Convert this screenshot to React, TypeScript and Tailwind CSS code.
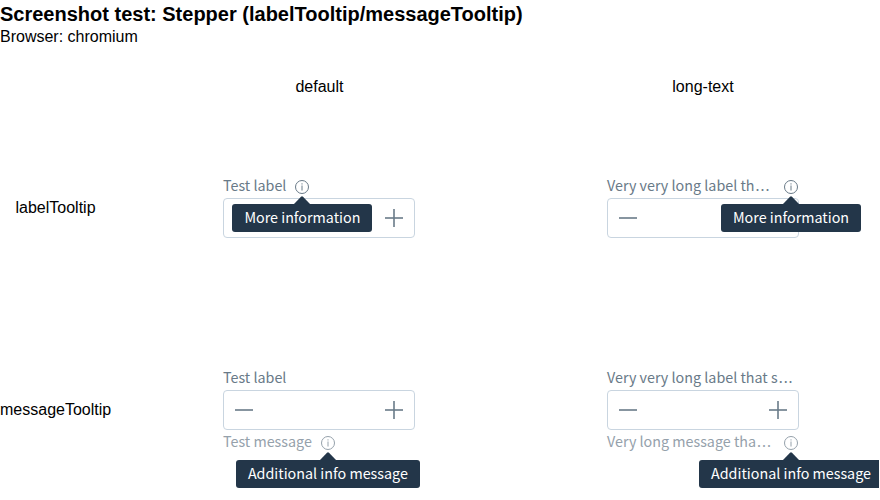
import type { ReactNode } from 'react';

function Tooltip({ children }: { children: ReactNode }) {
  return (
    <div className="absolute left-1/2 top-[17px] z-10 flex w-0 flex-col items-center">
      <svg className="block shrink-0" width="16" height="8" viewBox="0 0 16 8" fill="#233649">
        <path d="M0 8 L7 .8 Q8 -.1 9 .8 L16 8Z" />
      </svg>
      <div className="h-7 whitespace-nowrap rounded-[3px] bg-[#233649] px-3 text-[14.32px] leading-[26px] text-white">
        {children}
      </div>
    </div>
  );
}

function InfoIcon({ tooltip }: { tooltip: string }) {
  return (
    <span className="relative ml-2 mt-1 block size-4 shrink-0">
      <svg className="block" width="16" height="16" viewBox="0 0 16 16" fill="none" stroke="currentColor">
        <circle cx="8" cy="8" r="6.5" />
        <path d="M8 6.5v5M8 4.3v1.2" />
      </svg>
      <Tooltip>{tooltip}</Tooltip>
    </span>
  );
}

type FieldTextProps = { text: string; shortened?: boolean; tooltip?: string; className: string };

function FieldText({ text, shortened, tooltip, className }: FieldTextProps) {
  return (
    <div className={`flex h-5 whitespace-nowrap text-[14.32px] leading-5 ${className}`}>
      <span className={shortened ? 'grow' : ''}>
        {text}
        {shortened && <span className="ml-px tracking-[1px]">...</span>}
      </span>
      {tooltip && <InfoIcon tooltip={tooltip} />}
    </div>
  );
}

type StepperProps = {
  label: string;
  labelTooltip?: string;
  message?: string;
  messageTooltip?: string;
  shortened?: boolean;
};

function Stepper({ label, labelTooltip, message, messageTooltip, shortened }: StepperProps) {
  return (
    <div className="w-48 font-['Noto_Sans_CJK_KR',sans-serif]">
      <FieldText text={label} shortened={shortened} tooltip={labelTooltip} className="text-[#697a88]" />
      <div className="mt-[3px] flex h-10 items-center justify-between rounded border border-[#c9d5e0] bg-white px-2">
        <svg width="24" height="24" viewBox="0 0 24 24" fill="#697a88" fillOpacity=".8">
          <path d="M3 11h18v2H3z" />
        </svg>
        <svg width="24" height="24" viewBox="0 0 24 24" fill="#697a88" fillOpacity=".8">
          <path d="M3 11h18v2H3z" />
          <path d="M11 3h2v18h-2z" />
        </svg>
      </div>
      {message && (
        <FieldText text={message} shortened={shortened} tooltip={messageTooltip} className="mt-px text-[#95a1ab]" />
      )}
    </div>
  );
}

export default function App() {
  return (
    <main className="h-[500px] w-[879px] overflow-hidden bg-white font-['Liberation_Sans',sans-serif] text-base leading-[18px] text-black">
      <h1 className="h-7 text-xl font-bold leading-7">Screenshot test: Stepper (labelTooltip/messageTooltip)</h1>
      <p className="h-[18px]">Browser: chromium</p>
      <div className="mt-8 grid grid-cols-[127px_384px_384px] text-center">
        <span />
        <span className="h-[18px] pl-px">default</span>
        <span className="h-[18px]">long-text</span>
      </div>
      <div className="mt-[79px] grid grid-cols-[127px_384px_384px] text-center">
        <div className="pr-4 pt-6">labelTooltip</div>
        <div className="flex justify-center text-left">
          <Stepper label="Test label" labelTooltip="More information" />
        </div>
        <div className="flex justify-center text-left">
          <Stepper label="Very very long label th" shortened labelTooltip="More information" />
        </div>
      </div>
      <div className="mt-[129px] grid grid-cols-[127px_384px_384px] text-center">
        <div className="pr-4 pt-[34px]">messageTooltip</div>
        <div className="flex justify-center text-left">
          <Stepper label="Test label" message="Test message" messageTooltip="Additional info message" />
        </div>
        <div className="flex justify-center text-left">
          <Stepper
            label="Very very long label that s"
            shortened
            message="Very long message tha"
            messageTooltip="Additional info message"
          />
        </div>
      </div>
    </main>
  );
}
